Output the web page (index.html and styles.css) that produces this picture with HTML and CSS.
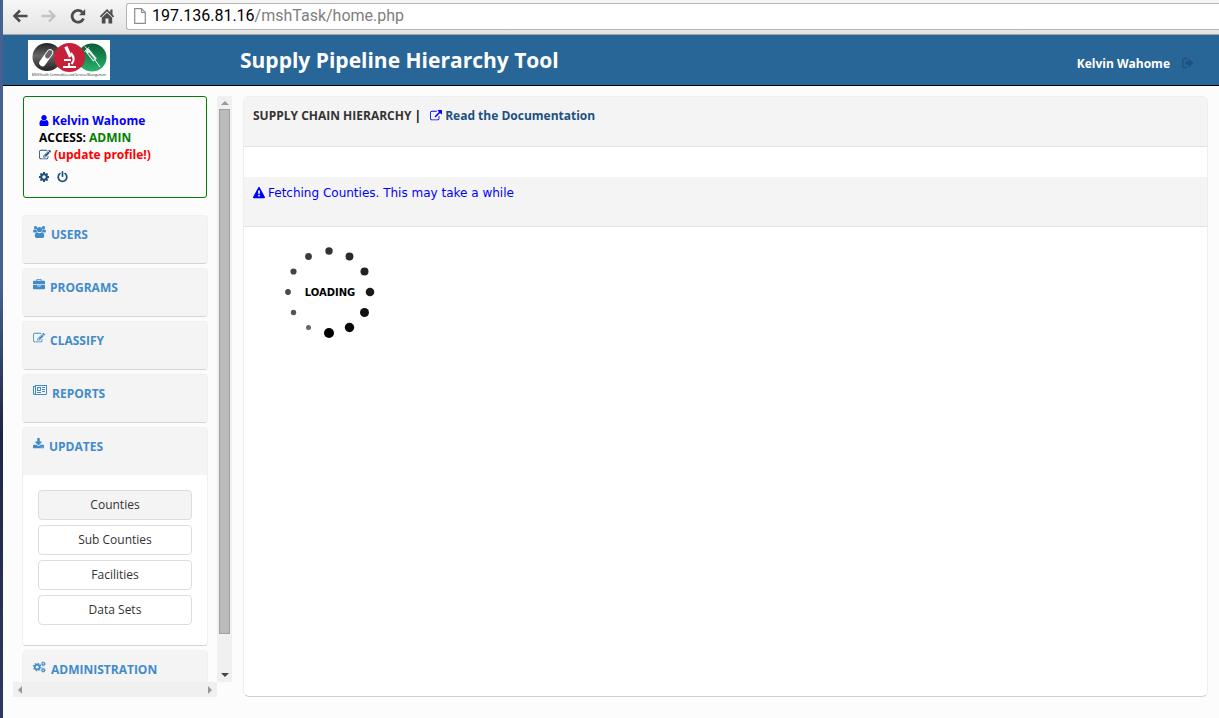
FILE: index.html
```html
<!DOCTYPE html>
<html lang="en">
<head>
<meta charset="utf-8">
<title>Supply Pipeline Hierarchy Tool</title>
<link rel="stylesheet" href="styles.css">
</head>
<body>
<svg class="defs" aria-hidden="true">
  <symbol id="user" viewBox="192 0 1408 1792"><path d="M1536 1399q0 109-62.5 187t-150.5 78h-854q-88 0-150.5-78t-62.5-187q0-85 8.500-160.500t31.500-152 58.500-131 94-89 134.500-34.500q131 128 313 128t313-128q76 0 134.500 34.500t94 89 58.500 131 31.500 152 8.500 160.500zm-256-887q0 159-112.500 271.500t-271.500 112.500-271.500-112.500-112.500-271.500 112.500-271.500 271.500-112.500 271.500 112.500 112.500 271.500z"/></symbol>
  <symbol id="edit" viewBox="0 0 1792 1792"><path d="M888 1184l116-116-152-152-116 116v56h96v96h56zm440-720q-16-16-33 1l-350 350q-17 17-1 33t33-1l350-350q17-17 1-33zm80 594v190q0 119-84.500 203.500t-203.500 84.500h-832q-119 0-203.500-84.500t-84.500-203.500v-832q0-119 84.500-203.500t203.500-84.500h832q63 0 117 25 15 7 18 23 3 17-9 29l-49 49q-14 14-32 8-23-6-45-6h-832q-66 0-113 47t-47 113v832q0 66 47 113t113 47h832q66 0 113-47t47-113v-126q0-13 9-22l64-64q15-15 35-7t20 29zm-96-738l288 288-672 672h-288v-288zm444 132l-92 92-288-288 92-92q28-28 68-28t68 28l152 152q28 28 28 68t-28 68z"/></symbol>
  <symbol id="cog" viewBox="128 0 1536 1792"><path d="M1152 896q0-106-75-181t-181-75-181 75-75 181 75 181 181 75 181-75 75-181zm512-109v222q0 12-8 23t-20 13l-185 28q-19 54-39 91 35 50 107 138 10 12 10 25t-9 23q-27 37-99 108t-94 71q-12 0-26-9l-138-108q-44 23-91 38-16 136-29 186-7 28-36 28h-222q-14 0-24.500-8.500t-11.500-21.500l-28-184q-49-16-90-37l-141 107q-10 9-25 9-14 0-25-11-126-114-165-168-7-10-7-23 0-12 8-23 15-21 51-66.500t54-70.500q-27-50-41-99l-183-27q-13-2-21-12.500t-8-23.500v-222q0-12 8-23t19-13l186-28q14-46 39-92-40-57-107-138-10-12-10-24 0-10 9-23 26-36 98.500-107.500t94.500-71.500q13 0 26 10l138 107q44-23 91-38 16-136 29-186 7-28 36-28h222q14 0 24.500 8.500t11.500 21.500l28 184q49 16 90 37l142-107q9-9 24-9 13 0 25 10 129 119 165 170 7 8 7 22 0 12-8 23-15 21-51 66.500t-54 70.500q26 50 41 98l183 28q13 2 21 12.500t8 23.500z"/></symbol>
  <symbol id="power" viewBox="128 0 1536 1792"><path d="M1664 896q0 156-61 298t-164 245-245 164-298 61-298-61-245-164-164-245-61-298q0-182 80.500-343t226.500-270q43-32 95.500-25t83.500 50q32 42 24.500 94.500t-49.500 84.500q-98 74-151.500 181t-53.500 228q0 104 40.500 198.500t109.500 163.500 163.500 109.500 198.500 40.500 198.500-40.500 163.500-109.500 109.500-163.500 40.500-198.500q0-121-53.500-228t-151.500-181q-42-32-49.500-84.500t24.500-94.500q31-43 84-50t95 25q146 109 226.500 270t80.500 343zm-640-768v640q0 52-38 90t-90 38-90-38-38-90v-640q0-52 38-90t90-38 90 38 38 90z"/></symbol>
  <symbol id="external" viewBox="0 0 1792 1792"><path d="M1408 928v320q0 119-84.500 203.500t-203.500 84.500h-832q-119 0-203.500-84.500t-84.500-203.500v-832q0-119 84.500-203.500t203.500-84.500h704q14 0 23 9t9 23v64q0 14-9 23t-23 9h-704q-66 0-113 47t-47 113v832q0 66 47 113t113 47h832q66 0 113-47t47-113v-320q0-14 9-23t23-9h64q14 0 23 9t9 23zm384-864v512q0 26-19 45t-45 19-45-19l-176-176-652 652q-10 10-23 10t-23-10l-114-114q-10-10-10-23t10-23l652-652-176-176q-19-19-19-45t19-45 45-19h512q26 0 45 19t19 45z"/></symbol>
  <symbol id="warning" viewBox="0 0 1792 1792"><path d="M1024 1375v-190q0-14-9.500-23.500t-22.500-9.500h-192q-13 0-22.500 9.500t-9.500 23.500v190q0 14 9.500 23.500t22.500 9.500h192q13 0 22.500-9.500t9.500-23.500zm-2-374l18-459q0-12-10-19-13-11-24-11h-220q-11 0-24 11-10 7-10 21l17 457q0 10 10 16.500t24 6.500h185q14 0 23.500-6.500t10.500-16.500zm-14-934l768 1408q35 63-2 126-17 29-46.500 46t-63.500 17h-1536q-34 0-63.500-17t-46.500-46q-37-63-2-126l768-1408q17-31 47-49t65-18 65 18 47 49z"/></symbol>
  <symbol id="download" viewBox="64 0 1664 1792"><path d="M1344 1344q0-26-19-45t-45-19-45 19-19 45 19 45 45 19 45-19 19-45zm256 0q0-26-19-45t-45-19-45 19-19 45 19 45 45 19 45-19 19-45zm128-224v320q0 40-28 68t-68 28h-1472q-40 0-68-28t-28-68v-320q0-40 28-68t68-28h465l135 136q58 56 136 56t136-56l136-136h464q40 0 68 28t28 68zm-325-569q17 41-14 70l-448 448q-18 19-45 19t-45-19l-448-448q-31-29-14-70 17-39 59-39h256v-448q0-26 19-45t45-19h256q26 0 45 19t19 45v448h256q42 0 59 39z"/></symbol>
  <symbol id="briefcase" viewBox="0 0 1792 1792"><path d="M640 256h512v-128h-512v128zm1152 640v480q0 66-47 113t-113 47h-1472q-66 0-113-47t-47-113v-480h672v160q0 26 19 45t45 19h320q26 0 45-19t19-45v-160h672zm-768 0v128h-256v-128h256zm768-480v384h-1792v-384q0-66 47-113t113-47h352v-160q0-40 28-68t68-28h576q40 0 68 28t28 68v160h352q66 0 113 47t47 113z"/></symbol>
  <symbol id="users" viewBox="0 0 13 12"><circle cx="2.600" cy="1.800" r="1.700"/><circle cx="10.400" cy="1.800" r="1.700"/><circle cx="6.500" cy="3.500" r="2.600"/><path d="M1.300 3.400Q2.600 4.200 3.500 3.600Q3.600 5 4.300 5.800Q3.200 6 2.700 6.600H1.200Q0 6.500 0 5.200Q.1 3.400 1.300 3.400ZM11.700 3.400Q10.400 4.200 9.500 3.600Q9.400 5 8.700 5.800Q9.800 6 10.300 6.600H11.800Q13 6.500 13 5.200Q12.900 3.400 11.700 3.400Z"/><path d="M4.300 6.300Q6.500 8.100 8.700 6.300Q11.200 6.300 11.200 10Q11.200 12 9.500 12H3.500Q1.800 12 1.800 10Q1.800 6.300 4.300 6.300Z"/></symbol>
  <symbol id="news" viewBox="0 0 14 12"><path fill-rule="evenodd" d="M2 0H14V8.500Q14 10 12.500 10H1.500Q0 10 0 8.500V1H2ZM1 2V8.500Q1.500 9.300 2 8.500V2ZM3 1V8.500L2.900 9H12.500Q13 9 13 8.500V1ZM4 2H8V6H4ZM5 3V5H7V3ZM9 2H12V3H9ZM9 4H12V5H9ZM9 6H12V7H9ZM4 7H8V8H4Z"/></symbol>
  <symbol id="cogs" viewBox="0 0 14 12"><circle cx="4.500" cy="6" r="2.600" fill="none" stroke="currentColor" stroke-width="1.800"/><circle cx="4.500" cy="6" r="4" fill="none" stroke="currentColor" stroke-width="1.200" stroke-dasharray="1.570 1.570"/><circle cx="11" cy="2.600" r="1.400" fill="none" stroke="currentColor" stroke-width="1.200"/><circle cx="11" cy="2.600" r="2.300" fill="none" stroke="currentColor" stroke-width=".8" stroke-dasharray=".9 .9"/><circle cx="11" cy="9.400" r="1.400" fill="none" stroke="currentColor" stroke-width="1.200"/><circle cx="11" cy="9.400" r="2.300" fill="none" stroke="currentColor" stroke-width=".8" stroke-dasharray=".9 .9"/></symbol>
  <symbol id="signout" viewBox="0 0 12 12"><path d="M5 1.500H2.500Q.7 1.500 .7 3.200V8.800Q.7 10.500 2.500 10.500H5" fill="none" stroke="currentColor" stroke-width="1.400"/><path d="M3.500 4.200H6.500V1.500L11.500 6L6.500 10.500V7.800H3.500Z"/></symbol>
</svg>

<div class="window">
  <div class="toolbar">
    <button class="nav-btn" aria-label="Back"><svg width="16" height="16" viewBox="0 0 16 16"><path d="M15.500 8H3M8 2.500L2.500 8L8 13.500" fill="none" stroke="#4d4d4d" stroke-width="2.600"/></svg></button>
    <button class="nav-btn" aria-label="Forward"><svg width="16" height="16" viewBox="0 0 16 16"><path d="M.5 8H13M8 2.500L13.500 8L8 13.500" fill="none" stroke="#c3c3c3" stroke-width="2.400"/></svg></button>
    <button class="nav-btn" aria-label="Reload"><svg width="16" height="16" viewBox="0 0 16 16"><path d="M13.500 10.500A5.900 5.900 0 1 1 12.300 4.200" fill="none" stroke="#4d4d4d" stroke-width="2.800"/><path d="M15.200 1V7.200H9Z" fill="#4d4d4d"/></svg></button>
    <button class="nav-btn" aria-label="Home"><svg width="16" height="16" viewBox="0 0 16 16"><path d="M8 1L.8 8.200L2 9.400L8 3.500L14 9.400L15.200 8.200L13.500 6.500V1.500H11.300V4.200Z" fill="#4d4d4d"/><path d="M8 4.800L2.800 9.800V15.500H6.500V10.500H9.500V15.500H13.200V9.800Z" fill="#4d4d4d"/></svg></button>
    <div class="address" role="textbox" aria-label="Address">
      <svg width="12" height="16" viewBox="0 0 12 16"><path d="M.7 .7H7.500L11.300 4.500V15.300H.7ZM7.500 .7V4.500H11.300" fill="#fff" stroke="#8c8c8c" stroke-width="1.200"/></svg>
      <span class="url"><span class="host">197.136.81.16</span>/mshTask/home.php</span>
    </div>
  </div>

  <header class="header">
    <svg class="logo" width="82" height="40" viewBox="0 0 82 40" role="img" aria-label="MSH logo">
      <defs>
        <linearGradient id="gk" x2="0" y2="1"><stop offset="0" stop-color="#222"/><stop offset=".45" stop-color="#666"/><stop offset="1" stop-color="#222"/></linearGradient>
        <linearGradient id="gg" x2="0" y2="1"><stop offset="0" stop-color="#075c35"/><stop offset="1" stop-color="#2bb36c"/></linearGradient>
      </defs>
      <rect width="82" height="40" fill="#fff"/>
      <ellipse cx="19" cy="17" rx="14.500" ry="14" fill="url(#gk)"/>
      <ellipse cx="64" cy="17.500" rx="14.500" ry="14" fill="url(#gg)"/>
      <ellipse cx="41.500" cy="17.500" rx="15.500" ry="14.500" fill="#c8203a"/>
      <path d="M14.500 23L22 12.500" stroke="#fff" stroke-width="6.500" stroke-linecap="round"/>
      <path d="M19.500 16L22 12.500" stroke="#666" stroke-width="4.800" stroke-linecap="round"/>
      <path d="M38.500 8L42.500 17M37 9L40 7.500" stroke="#fff" stroke-width="3.200"/>
      <path d="M43 13Q48 19 43.500 24M36 20H43M35 27H48M41 23V27" fill="none" stroke="#fff" stroke-width="2"/>
      <path d="M59 10L67 20" stroke="#e9f5ee" stroke-width="4.500"/>
      <path d="M60.500 13L66 19.500" stroke="#2b9860" stroke-width="1.500"/>
      <path d="M56.500 11.500L61 7.500M57 6.500L60 10M67 20L72 27" stroke="#fff" stroke-width="1"/>
      <text class="logo-text" x="41" y="36" text-anchor="middle">MSH/Health Commodities and Services Management</text>
    </svg>
    <h1 class="title">Supply Pipeline Hierarchy Tool</h1>
    <div class="account">
      <span>Kelvin Wahome</span>
      <a class="signout" href="#" aria-label="Sign out"><svg class="icon" width="12" height="12"><use href="#signout"/></svg></a>
    </div>
  </header>

  <div class="layout">
    <aside class="sidebar">
      <div class="side-view">
        <section class="profile">
          <div class="line name"><svg class="icon" width="10" height="13"><use href="#user"/></svg>Kelvin Wahome</div>
          <div>ACCESS: <span class="role">ADMIN</span></div>
          <a class="line update" href="#"><svg class="icon steel" width="12" height="12"><use href="#edit"/></svg>(update profile!)</a>
          <div class="tools steel">
            <a href="#" aria-label="Settings"><svg class="icon" width="10" height="12"><use href="#cog"/></svg></a>
            <a href="#" aria-label="Log out"><svg class="icon" width="11" height="12"><use href="#power"/></svg></a>
          </div>
        </section>
        <nav class="menu">
          <section class="panel"><a class="panel-head" href="#"><svg class="icon" width="13" height="12"><use href="#users"/></svg>USERS</a></section>
          <section class="panel"><a class="panel-head" href="#"><svg class="icon" width="12" height="12"><use href="#briefcase"/></svg>PROGRAMS</a></section>
          <section class="panel"><a class="panel-head" href="#"><svg class="icon" width="12" height="12"><use href="#edit"/></svg>CLASSIFY</a></section>
          <section class="panel"><a class="panel-head" href="#"><svg class="icon" width="14" height="12"><use href="#news"/></svg>REPORTS</a></section>
          <section class="panel"><a class="panel-head" href="#"><svg class="icon" width="11" height="12"><use href="#download"/></svg>UPDATES</a>
            <div class="panel-body">
              <button class="option active">Counties</button>
              <button class="option">Sub Counties</button>
              <button class="option">Facilities</button>
              <button class="option">Data Sets</button>
            </div>
          </section>
          <section class="panel"><a class="panel-head" href="#"><svg class="icon" width="13" height="12"><use href="#cogs"/></svg>ADMINISTRATION</a></section>
        </nav>
      </div>
      <div class="vbar"><span class="arrow up"></span><span class="thumb"></span><span class="arrow down"></span></div>
      <div class="hbar"><span class="arrow left"></span><span class="arrow right"></span></div>
    </aside>

    <main class="content">
      <div class="content-head">
        <span class="heading">SUPPLY CHAIN HIERARCHY <span class="bar">|</span></span>
        <a class="docs" href="#"><svg class="icon" width="12" height="12"><use href="#external"/></svg>Read the Documentation</a>
      </div>
      <div class="notice"><svg class="icon" width="12" height="12"><use href="#warning"/></svg>Fetching Counties. This may take a while</div>
      <svg class="loader" width="100" height="100" viewBox="0 0 100 100" role="img" aria-label="Loading">
        <circle cx="50" cy="9" r="3.700" fill="#333"/><circle cx="70.500" cy="14.500" r="3.900" fill="#2b2b2b"/><circle cx="85.500" cy="29.500" r="4" fill="#222"/><circle cx="91" cy="50" r="4.300" fill="#1b1b1b"/><circle cx="85.500" cy="70.500" r="4.500" fill="#111"/><circle cx="70.500" cy="85.500" r="4.700" fill="#080808"/><circle cx="50" cy="91" r="5" fill="#000"/><circle cx="29.500" cy="85.500" r="2.500" fill="#666"/><circle cx="14.500" cy="70.500" r="2.700" fill="#555"/><circle cx="9" cy="50" r="2.900" fill="#4a4a4a"/><circle cx="14.500" cy="29.500" r="3.100" fill="#444"/><circle cx="29.500" cy="14.500" r="3.400" fill="#3b3b3b"/>
        <text class="loader-text" x="51" y="54" text-anchor="middle">LOADING</text>
      </svg>
    </main>
  </div>
</div>
</body>
</html>
```
FILE: styles.css
```css
* { box-sizing: border-box; }

body {
  margin: 0;
  font: bold 12px/17px "Open Sans", "Noto Sans", sans-serif;
  color: #000;
  background: #fcfcfc;
}

a { color: inherit; text-decoration: none; }
.defs { display: none; }
.icon { display: block; flex: none; fill: currentColor; }
.steel { color: #205081; }

.window {
  display: flex;
  flex-direction: column;
  height: 100vh;
  border-left: 3px solid #3b5380;
  border-image: linear-gradient(#46608f 0 40%, #1d2745 60%, #2b3a60) 1;
}

/* Browser toolbar */
.toolbar {
  display: flex;
  align-items: center;
  gap: 13px;
  height: 35px;
  flex: none;
  padding: 0 0 2px 9px;
  background: linear-gradient(#f6f6f6, #e4e4e4);
  border-bottom: 1px solid #a3a3a3;
}
.nav-btn { display: block; padding: 0; border: 0; background: none; width: 16px; height: 16px; }
.nav-btn svg { display: block; }
.address {
  display: flex;
  flex: 1;
  align-items: center;
  gap: 6px;
  height: 27px;
  margin-left: -2px;
  padding-left: 7px;
  border: 1px solid #b4b4b4;
  border-right: 0;
  border-radius: 3px 0 0 3px;
  background: #fff;
}
.url { font: 16px/24px Roboto, "Noto Sans", sans-serif; color: #808080; }
.host { color: #000; }

/* Application header */
.header {
  display: flex;
  align-items: center;
  flex: none;
  height: 51px;
  padding: 0 25px;
  color: #fff;
  background: #286698;
  border-bottom: 1px solid #000;
}
.logo { display: block; flex: none; margin-right: 130px; }
.logo-text { font: 3px "Open Sans", sans-serif; fill: #222; }
.title { flex: 1; margin: 0; font-size: 21px; line-height: 28px; }
.account { display: flex; align-items: center; gap: 12px; padding-top: 6px; }
.signout { color: #205081; }

.layout {
  display: flex;
  flex: 1;
  min-height: 0;
  gap: 11px;
  padding: 10px 11px 21px 10px;
}

/* Sidebar */
.sidebar {
  display: grid;
  grid-template: minmax(0, 1fr) 15px / 204px 15px;
  flex: none;
}
.side-view { overflow: hidden; padding: 0 9px; }
.profile {
  height: 102px;
  margin: 0 1px 17px;
  padding: 15px;
  border: 1px solid #008000;
  border-radius: 3px;
}
.line { display: flex; align-items: center; gap: 3px; }
.name { color: #00f; }
.role { color: #008000; }
.update { color: #f00; }
.tools { display: flex; gap: 8px; padding-top: 8px; }

.menu { display: flex; flex-direction: column; gap: 4px; }
.panel {
  flex: none;
  border: 1px solid #f0f0f0;
  border-bottom-color: #d4d4d4;
  border-radius: 4px;
  background: #fff;
  overflow: hidden;
}
.panel-head {
  display: flex;
  align-items: flex-start;
  gap: 5px;
  height: 47px;
  padding: 10px;
  color: #428bca;
  background: #f4f4f4;
}
.panel-body { display: flex; flex-direction: column; gap: 5px; padding: 15px 15px 20px; }
.option {
  height: 30px;
  padding: 0 0 2px;
  border: 1px solid #ddd;
  border-radius: 4px;
  background: #fff;
  color: #333;
  font: 12px/17px "Open Sans", "Noto Sans", sans-serif;
}
.option.active { background: #f4f4f4; }

/* Scroll bars */
.vbar, .hbar { display: flex; align-items: center; background: #f0f0f0; }
.vbar { flex-direction: column; padding: 5px 2px; gap: 4px; }
.hbar { justify-content: space-between; padding: 0 5px; }
.thumb { width: 11px; height: 525px; margin-bottom: auto; flex: 0 1 auto; background: #bbb; border: 1px solid #a0a0a0; }
.arrow { width: 0; height: 0; flex: none; border: 4px solid transparent; }
.up { border-top: 0; border-bottom-color: #999; }
.down { border-bottom: 0; border-top-color: #444; }
.left { border-left: 0; border-right-color: #999; }
.right { border-right: 0; border-left-color: #999; }

/* Main content */
.content {
  flex: 1;
  min-width: 0;
  border: 1px solid #eee;
  border-bottom-color: #d0d0d0;
  border-radius: 6px;
  background: #fff;
  overflow: hidden;
}
.content-head, .notice { display: flex; height: 50px; padding: 10px 9px; background: #f4f4f4; border-bottom: 1px solid #e2e2e2; }
.content-head { gap: 9px; }
.heading { color: #333; }
.bar { color: #000; }
.docs { display: flex; gap: 3px; color: #205081; }
.docs .icon { margin-top: 3px; color: #00f; }
.notice { gap: 3px; margin-top: 30px; padding-top: 8px; color: #00f; font: 12px/17px "DejaVu Sans", sans-serif; }
.notice .icon { margin-top: 2px; }
.loader { display: block; margin: 15px 0 0 35px; }
.loader-text { font: bold 10px "DejaVu Sans", sans-serif; fill: #000; }
```
